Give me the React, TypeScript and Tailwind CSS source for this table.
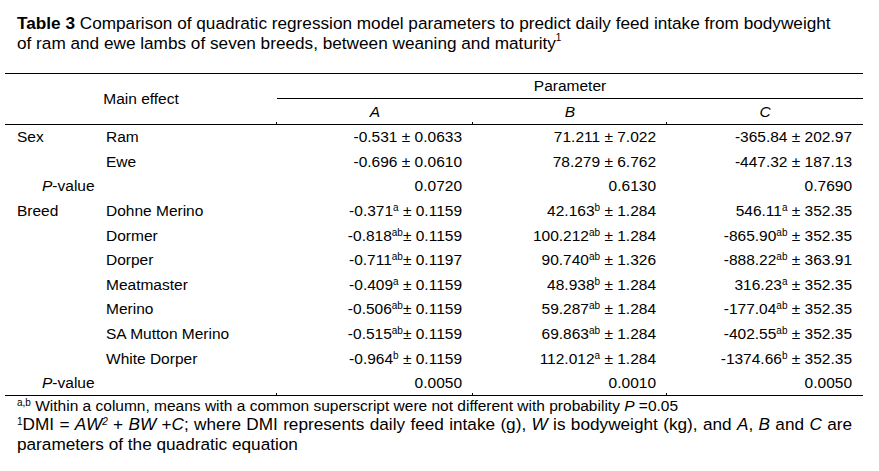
type Cell = [string, string, string];

type Row = {
    group: string;
    effect: string;
    pvalue?: boolean;
    cells: Cell[];
};

const rows: Row[] = [
    { group: "Sex", effect: "Ram", cells: [["-0.531", "", " ± 0.0633"], ["71.211", "", " ± 7.022"], ["-365.84", "", " ± 202.97"]] },
    { group: "", effect: "Ewe", cells: [["-0.696", "", " ± 0.0610"], ["78.279", "", " ± 6.762"], ["-447.32", "", " ± 187.13"]] },
    { group: "P", effect: "", pvalue: true, cells: [["0.0720", "", ""], ["0.6130", "", ""], ["0.7690", "", ""]] },
    { group: "Breed", effect: "Dohne Merino", cells: [["-0.371", "a", " ± 0.1159"], ["42.163", "b", " ± 1.284"], ["546.11", "a", " ± 352.35"]] },
    { group: "", effect: "Dormer", cells: [["-0.818", "ab", "± 0.1159"], ["100.212", "ab", " ± 1.284"], ["-865.90", "ab", " ± 352.35"]] },
    { group: "", effect: "Dorper", cells: [["-0.711", "ab", "± 0.1197"], ["90.740", "ab", " ± 1.326"], ["-888.22", "ab", " ± 363.91"]] },
    { group: "", effect: "Meatmaster", cells: [["-0.409", "a", " ± 0.1159"], ["48.938", "b", " ± 1.284"], ["316.23", "a", " ± 352.35"]] },
    { group: "", effect: "Merino", cells: [["-0.506", "ab", "± 0.1159"], ["59.287", "ab", " ± 1.284"], ["-177.04", "ab", " ± 352.35"]] },
    { group: "", effect: "SA Mutton Merino", cells: [["-0.515", "ab", "± 0.1159"], ["69.863", "ab", " ± 1.284"], ["-402.55", "ab", " ± 352.35"]] },
    { group: "", effect: "White Dorper", cells: [["-0.964", "b", " ± 0.1159"], ["112.012", "a", " ± 1.284"], ["-1374.66", "b", " ± 352.35"]] },
    { group: "P", effect: "", pvalue: true, cells: [["0.0050", "", ""], ["0.0010", "", ""], ["0.0050", "", ""]] },
];

const Value = ({ cell }: { cell: Cell }) => (
    <span className="whitespace-pre">
        {cell[0]}
        {cell[1] && <sup className="text-[10px]">{cell[1]}</sup>}
        {cell[2]}
    </span>
);

// little stub left over from the cell grid, sits just above a rule
const Tick = () => <span className="absolute left-[-1px] bottom-0 w-px h-[2px] bg-black" />;

const App = () => {
    const last = rows.length - 1;
    return (
        <div className="w-[879px] h-[471px] bg-white text-black font-['Liberation_Sans',Arial,sans-serif] pt-[13px] overflow-hidden">
            <p className="pl-[17px] text-[17.2px] leading-[20px] whitespace-nowrap">
                <b>Table 3</b> Comparison of quadratic regression model parameters to predict daily feed intake from bodyweight
                <br />
                of ram and ewe lambs of seven breeds, between weaning and maturity
                <sup className="text-[10px] -top-[0.8em]">1</sup>
            </p>

            <table className="ml-[5px] mt-[20px] w-[858px] table-fixed border-collapse text-[15.5px]">
                <colgroup>
                    <col className="w-[92px]" />
                    <col className="w-[180px]" />
                    <col className="w-[196px]" />
                    <col className="w-[194px]" />
                    <col className="w-[196px]" />
                </colgroup>
                <thead>
                    <tr className="h-[25px] border-t border-black">
                        <th rowSpan={2} colSpan={2} className="font-normal text-center p-0 border-b border-black">
                            Main effect
                        </th>
                        <th colSpan={3} className="font-normal text-center p-0 border-b border-black">
                            Parameter
                        </th>
                    </tr>
                    <tr className="h-[26px] border-b border-black">
                        <th className="relative font-normal italic text-center p-0">
                            <Tick />A
                        </th>
                        <th className="relative font-normal italic text-center p-0">
                            <Tick />B
                        </th>
                        <th className="relative font-normal italic text-center p-0">
                            <Tick />C
                        </th>
                    </tr>
                </thead>
                <tbody>
                    {rows.map((row, i) => (
                        <tr key={i} className={`h-[24.6px] ${i === last ? "border-b border-black" : ""}`}>
                            {row.pvalue ? (
                                <td className="p-0 pl-[37px] whitespace-nowrap">
                                    <i>P</i>-value
                                </td>
                            ) : (
                                <td className="p-0 pl-[12px]">{row.group}</td>
                            )}
                            <td className="p-0 pl-[9px] whitespace-nowrap">{row.effect}</td>
                            {row.cells.map((c, j) => (
                                <td key={j} className={`p-0 pr-[11px] text-right ${i === last ? "relative" : ""}`}>
                                    {i === last && <Tick />}
                                    <Value cell={c} />
                                </td>
                            ))}
                        </tr>
                    ))}
                </tbody>
            </table>

            <div className="ml-[17px] w-[835px] leading-[19.5px]">
                <p className="text-[15.5px]">
                    <sup className="text-[10px]">a,b</sup> Within a column, means with a common superscript were not different with probability <i>P</i> =0.05
                </p>
                <div className="text-[17.2px]">
                    <p className="text-justify [text-align-last:justify] whitespace-nowrap">
                        <sup className="text-[10px]">1</sup>DMI = <i>AW</i>
                        <sup className="text-[10px] italic">2</sup> + <i>BW</i> +<i>C</i>; where DMI represents daily feed intake (g), <i>W</i> is bodyweight (kg), and <i>A</i>, <i>B</i> and <i>C</i> are
                    </p>
                    <p>parameters of the quadratic equation</p>
                </div>
            </div>
        </div>
    );
};

export default App;
